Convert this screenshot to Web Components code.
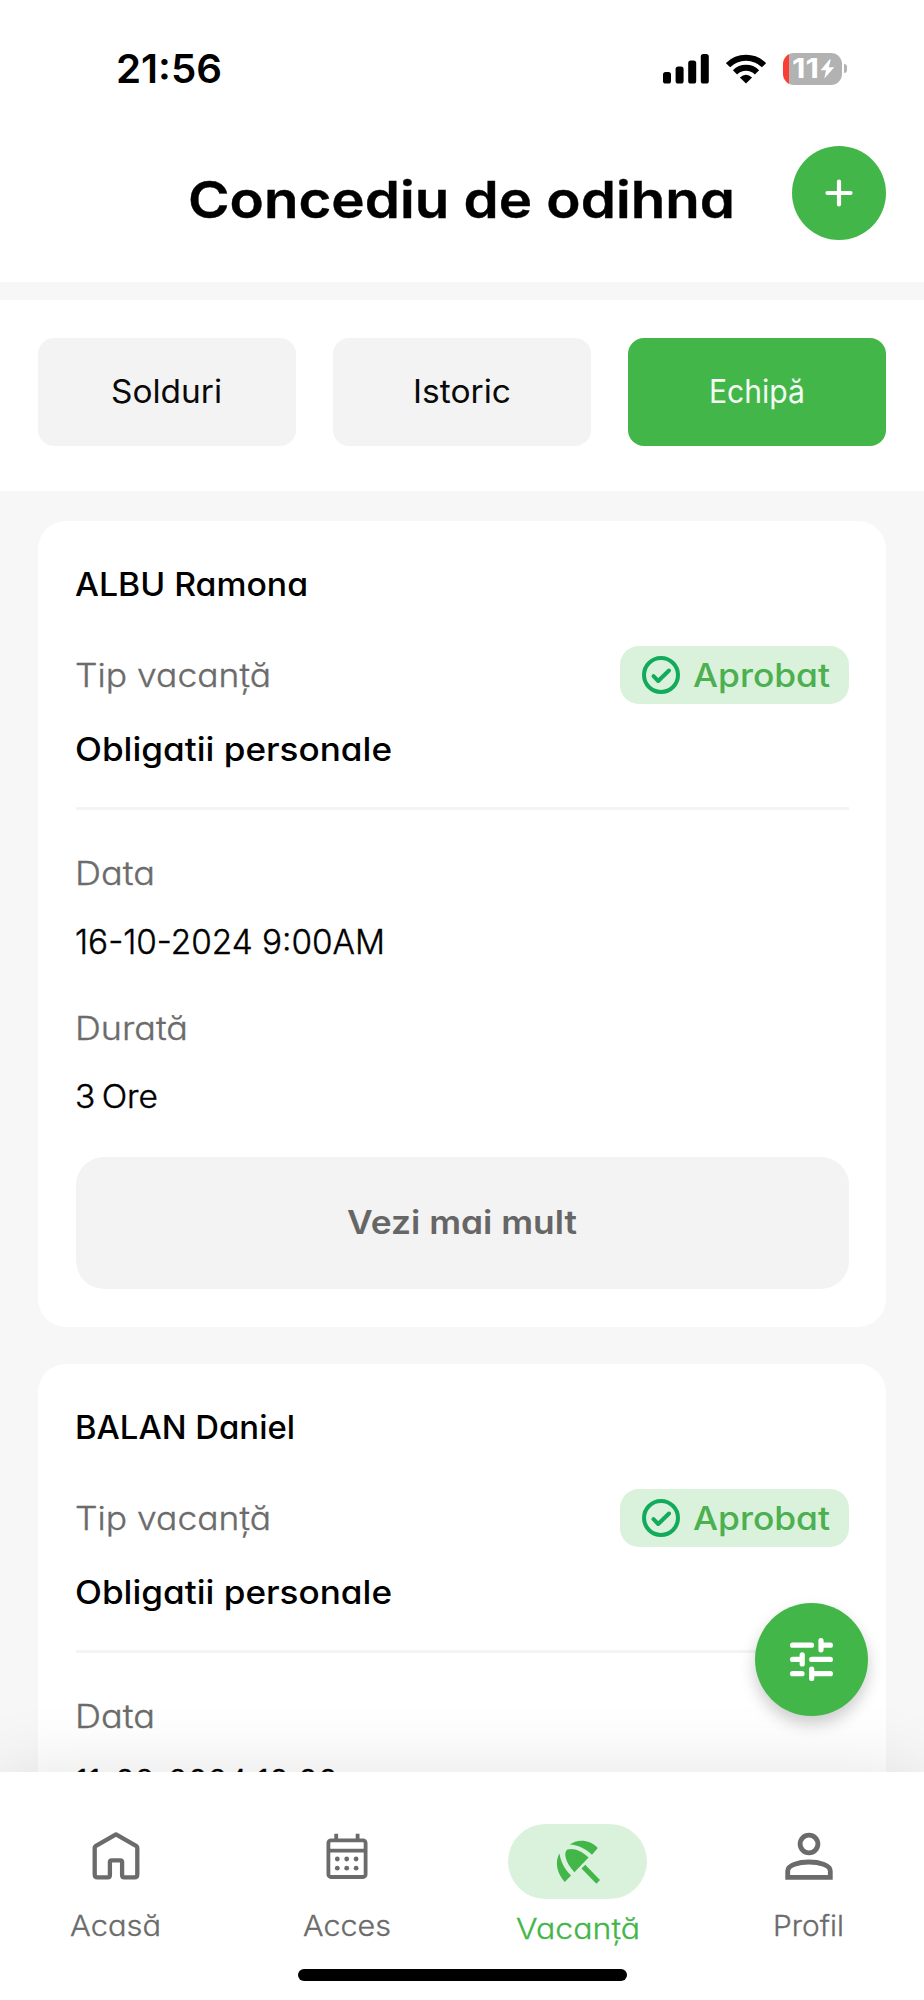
<!DOCTYPE html>
<html lang="ro">
<head>
<meta charset="utf-8">
<title>Concediu de odihna</title>
<style>
html,body{margin:0;padding:0;background:#fff}
body{font-family:Inter,"Liberation Sans",sans-serif;font-size:32.500px;line-height:48px;color:#000}
</style>
</head>
<body>
<leave-app></leave-app>
<script>
const define = (name, html, setup) => {
  const tpl = document.createElement('template');
  tpl.innerHTML = html;
  customElements.define(name, class extends HTMLElement {
    constructor() {
      super();
      this.attachShadow({mode: 'open'}).appendChild(tpl.content.cloneNode(true));
    }
    connectedCallback() { if (setup) setup(this, this.shadowRoot); }
  });
};

/* A line of text whose letterforms are stretched to fill a given advance width. */
define('fit-text', `<style>
:host{display:block;white-space:pre;font-feature-settings:"cv11"}
:host([plain]){font-feature-settings:normal}
span{display:inline-block;transform-origin:0 50%}
</style><span><slot></slot></span>`, (el, root) => {
  const s = root.querySelector('span');
  const target = +el.getAttribute('width');
  s.style.transform = 'none';
  const w = s.getBoundingClientRect().width;
  el.style.width = target + 'px';
  if (w) s.style.transform = 'scaleX(' + target / w + ')';
});

define('status-bar', `<style>
:host{display:flex;height:137px;padding:0 77px 0 116px;justify-content:space-between;align-items:center;box-sizing:border-box}
fit-text{font-size:39px;font-weight:600}
.r{display:flex;align-items:center;gap:17px}
svg{display:block}
.bat{display:flex;align-items:center;gap:2px}
.body{width:59px;height:32px;border-radius:11px;background:linear-gradient(90deg,#fb3e34 6.5px,#b2b2b2 6.5px);display:flex;align-items:center;justify-content:center;gap:1px;color:#fff;padding-left:3px;box-sizing:border-box}
.body fit-text{font-size:27px;font-weight:700;line-height:32px}
.tip{width:3.5px;height:9px;background:#b2b2b2;border-radius:0 4px 4px 0}
</style>
<fit-text plain width="106">21:56</fit-text>
<div class="r">
<svg width="46" height="30" viewBox="0 0 46 30"><rect y="18" width="8" height="11.5" rx="2.6"/><rect x="12.6" y="12.500" width="8" height="17" rx="2.6"/><rect x="25.200" y="6.500" width="8" height="23" rx="2.600"/><rect x="37.800" width="8" height="29.500" rx="2.600"/></svg>
<svg width="40" height="30" viewBox="0 0 40 30"><g fill="none" stroke="#000" stroke-width="6"><path d="M2 11.200A25.700 25.700 0 0 1 38 11.200"/><path d="M9 18.300A15.700 15.700 0 0 1 31 18.300"/></g><path d="M20 29.500L13.900 23.400Q20 18.200 26.100 23.400Z"/></svg>
<div class="bat"><div class="body"><fit-text plain width="27">11</fit-text><svg width="15" height="20" viewBox="0 0 15 20"><path fill="#fff" d="M9.500 0.500L0.600 11.200H6L4.300 19.500L14.300 8.200H8.700L10.800 0.500Z"/></svg></div><div class="tip"></div></div>
</div>`);

define('page-header', `<style>
:host{display:grid;grid-template-columns:1fr 94px;height:145px;padding:8px 38px 0 188px;box-sizing:border-box;background:#fff}
fit-text{font-size:51px;font-weight:600;line-height:60px;margin-top:25px;-webkit-text-stroke:.4px #000}
button{all:unset;width:94px;height:94px;border-radius:50%;background:#43b649;display:grid;place-items:center;margin-top:.5px}
svg{display:block}
</style>
<fit-text width="547">Concediu de odihna</fit-text>
<button aria-label="Adaugă"><svg width="28" height="28" viewBox="0 0 28 28"><path d="M14 2.500V25.500M2.500 14H25.500" stroke="#fff" stroke-width="4.200" stroke-linecap="round"/></svg></button>`);

define('tab-button', `<style>
:host{display:grid;place-items:center;height:108px;border-radius:16px;background:#f3f3f3;color:#0a0a0a;font-size:32px}
:host([active]){background:#43b649;color:#f2fbf2}
</style><slot></slot>`);

define('tab-strip', `<style>
:host{display:grid;grid-template-columns:repeat(3,1fr);gap:37.500px;padding:38px 38px 44.500px;border-top:18px solid #f7f7f7;background:#fff}
</style>
<tab-button><fit-text plain width="111">Solduri</fit-text></tab-button>
<tab-button><fit-text plain width="98">Istoric</fit-text></tab-button>
<tab-button active><fit-text plain width="96">Echipă</fit-text></tab-button>`);

define('status-badge', `<style>
:host{display:flex;align-items:center;height:58.500px;width:229px;box-sizing:border-box;padding-left:22px;gap:13px;border-radius:19px;background:#daf1dc;color:#4caf50;font-weight:500}
svg{display:block}
fit-text{padding-top:3px}
</style>
<svg width="38" height="38" viewBox="0 0 38 38" fill="none" stroke="#12aa5b" stroke-width="4"><circle cx="19" cy="19" r="17"/><path d="M11.500 20.200L16.200 25L27 14.500" stroke-linecap="round" stroke-linejoin="round"/></svg>
<fit-text width="137">Aprobat</fit-text>`);

define('leave-card', `<style>
:host{display:block;background:#fff;border-radius:28px;padding:40px 37.500px 37.500px;box-sizing:border-box;height:805.500px;flex:none}
.name{font-weight:500}
.row{display:flex;justify-content:space-between;align-items:center;margin-top:36.500px;height:58.500px}
.row .lab{padding-top:3px}
.type{font-weight:500;margin-top:21.500px}
.lab{color:#6b6b6b;font-weight:300;-webkit-text-stroke:.35px #6b6b6b}
hr{border:0;height:2.500px;background:#f4f4f4;margin:33.500px 0 40px}
.v{margin-top:20px}
.gap{margin-top:39px}
.three{word-spacing:-3px}
.btn{margin-top:36.500px;height:132px;border-radius:28px;background:#f3f3f3;color:#666;font-weight:600;display:grid;place-items:center}
fit-text,.name,.v{margin-left:-.5px}
.btn fit-text{margin-left:0}
.date{font-weight:300;-webkit-text-stroke:.4px #000}
.three{font-weight:300;-webkit-text-stroke:.4px #000}
:host([brief]) .date{margin-top:17.500px}
:host([brief]) .full{display:none}
</style>
<div class="name"><slot name="name"></slot></div>
<div class="row"><fit-text class="lab" width="196">Tip vacanță</fit-text><status-badge></status-badge></div>
<fit-text class="type" width="317">Obligatii personale</fit-text>
<hr>
<fit-text class="lab" width="80">Data</fit-text>
<div class="v date"><slot name="date"></slot></div>
<div class="full">
<fit-text class="lab gap" width="113">Durată</fit-text>
<fit-text class="v three" width="83">3 Ore</fit-text>
<div class="btn"><fit-text width="230">Vezi mai mult</fit-text></div>
</div>`);

define('nav-item', `<style>
:host{display:flex;flex-direction:column;align-items:center;color:#6b6b6b;font-size:28px;font-weight:300;-webkit-text-stroke:.3px currentColor;padding-top:60px;box-sizing:border-box}
:host([active]){color:#43b649;padding-top:52px}
.ico{height:47px;display:grid;place-items:center;margin-bottom:23px}
:host([active]) .ico{width:139px;height:75px;border-radius:38px;background:#daf1dc;margin-bottom:6px}
</style><div class="ico"><slot name="icon"></slot></div><slot></slot>`);

define('bottom-nav', `<style>
:host{display:flex;flex-direction:column;align-items:center;height:228px;background:#fff;position:relative;box-shadow:0 0 70px rgba(0,0,0,.11);flex:none}
.items{display:grid;grid-template-columns:repeat(4,1fr);width:100%;height:197px}
.bar{width:329px;height:12px;border-radius:6px;background:#000}
svg{display:block}
</style>
<div class="items">
<nav-item><svg slot="icon" width="48" height="48" viewBox="0 0 48 48" fill="none" stroke="#6b6b6b" stroke-width="4.300" stroke-linejoin="round"><path d="M2.700 15.800Q2.700 14.800 3.500 14.200L24 2.300L44.500 14.200Q45.300 14.800 45.300 15.800V42.500Q45.300 45.300 42.500 45.300H32.200Q30.100 45.300 30.100 43.200V30Q30.100 28.300 28.400 28.300H19.600Q17.900 28.300 17.900 30V43.200Q17.900 45.300 15.800 45.300H5.500Q2.700 45.300 2.700 42.500Z"/></svg><fit-text width="91">Acasă</fit-text></nav-item>
<nav-item><svg slot="icon" width="42" height="46" viewBox="0 0 42 46" fill="none" stroke="#6b6b6b" stroke-width="3.800"><rect x="2.400" y="7.400" width="37.200" height="36.600" rx="2.600"/><path d="M2.400 17.700H39.600"/><path d="M10.200 0.700V7M31.600 0.700V7"/><g fill="#6b6b6b" stroke="none"><circle cx="11.300" cy="26" r="2.400"/><circle cx="20.700" cy="26" r="2.400"/><circle cx="30.100" cy="26" r="2.400"/><circle cx="11.300" cy="35.200" r="2.400"/><circle cx="20.700" cy="35.200" r="2.400"/><circle cx="30.100" cy="35.200" r="2.400"/></g></svg><fit-text width="88">Acces</fit-text></nav-item>
<nav-item active><svg slot="icon" width="44" height="44" viewBox="0 0 44 44" fill="#43b649"><path d="M13.800 4.500C21.500-1.500 34 -0.500 41.800 8L36 14.800C29.500 8.500 22 5 13.800 4.500Z"/><path d="M3.500 13.500C-1.500 22 1 33.500 8.800 42L15 35.600C8.500 29 4.500 21 3.500 13.500Z"/><path d="M32.600 17.500C26 11 17 7.500 11.500 9.500C7 12 9.300 22.500 18.400 32.200Z"/><path d="M25.500 28.500L29.200 24.800L44 40L40.400 43.700Z"/></svg><fit-text width="124">Vacanță</fit-text></nav-item>
<nav-item><svg slot="icon" width="48" height="48" viewBox="0 0 48 48" fill="none" stroke="#6b6b6b" stroke-width="4.800"><circle cx="24" cy="12" r="8.900"/><path d="M2.700 45.300V39C2.700 33 14 30 24 30S45.300 33 45.300 39V45.300Z"/></svg><fit-text width="71">Profil</fit-text></nav-item>
</div>
<div class="bar"></div>`);

define('filter-fab', `<style>
:host{display:grid;place-items:center;width:113px;height:113px;border-radius:50%;background:#43b649;box-shadow:0 8px 16px rgba(0,0,0,.2)}
svg{display:block}
</style>
<svg width="43" height="43" viewBox="0 0 43 43" stroke="#fff" stroke-width="5.200" stroke-linecap="round"><path d="M2.600 7.200H21.500M31 2.600V11.800M31 7.200H40.400M2.600 21.400H12M12.200 16.800V26M21.700 21.400H40.400M2.600 35.700H12M21.700 31V40.400M21.700 35.700H40.400"/></svg>`);

define('leave-app', `<style>
:host{display:flex;flex-direction:column;width:924px;height:2000px;position:relative;overflow:hidden;background:#f7f7f7}
status-bar{background:#fff;flex:none}
.list{flex:1;min-height:0;overflow:hidden;padding:30.500px 38px 0;display:flex;flex-direction:column;gap:37.500px}
filter-fab{position:absolute;left:754.500px;top:1603px}
[slot="date"]{font-size:33.500px}
</style>
<status-bar></status-bar>
<page-header></page-header>
<tab-strip></tab-strip>
<div class="list">
<leave-card><fit-text slot="name" width="233">ALBU Ramona</fit-text><fit-text slot="date" width="310">16-10-2024 9:00AM</fit-text></leave-card>
<leave-card brief><fit-text slot="name" width="220">BALAN Daniel</fit-text><fit-text slot="date" width="263">11-09-2024 10:00</fit-text></leave-card>
</div>
<bottom-nav></bottom-nav>
<filter-fab></filter-fab>`);
</script>
</body>
</html>
